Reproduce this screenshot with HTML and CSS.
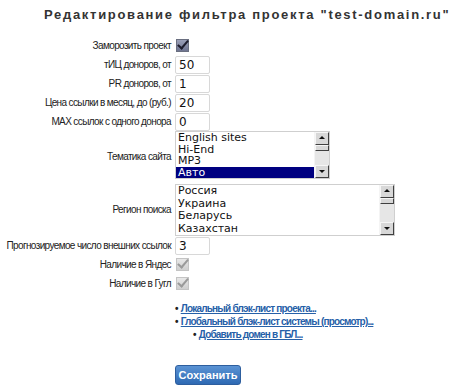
FILE: index.html
```html
<!DOCTYPE html>
<html lang="ru">
<head>
    <meta charset="UTF-8">
    <title>Редактирование фильтра проекта</title>
    <link rel="stylesheet" href="styles.css">
</head>
<body>

    <h1>Редактирование фильтра проекта "test-domain.ru"</h1>

    <!-- Filter form -->
    <table class="filter">
        <tr class="row-check">
            <td class="label">Заморозить проект</td>
            <td><span class="check"></span></td>
        </tr>
        <tr>
            <td class="label">тИЦ доноров, от</td>
            <td><span class="field">50</span></td>
        </tr>
        <tr>
            <td class="label">PR доноров, от</td>
            <td><span class="field">1</span></td>
        </tr>
        <tr>
            <td class="label">Цена ссылки в месяц, до (руб.)</td>
            <td><span class="field">20</span></td>
        </tr>
        <tr>
            <td class="label">MAX ссылок с одного донора</td>
            <td><span class="field">0</span></td>
        </tr>
        <tr>
            <td class="label">Тематика сайта</td>
            <td>
                <div class="listbox topics">
                    <div class="options">
                        <div>English sites</div>
                        <div>Hi-End</div>
                        <div>MP3</div>
                        <div class="selected">Авто</div>
                    </div>
                    <div class="scrollbar">
                        <span class="btn up"></span>
                        <span class="thumb"></span>
                        <span class="track"></span>
                        <span class="btn down"></span>
                    </div>
                </div>
            </td>
        </tr>
        <tr>
            <td class="label">Регион поиска</td>
            <td>
                <div class="listbox regions">
                    <div class="options">
                        <div>Россия</div>
                        <div>Украина</div>
                        <div>Беларусь</div>
                        <div>Казахстан</div>
                    </div>
                    <div class="scrollbar">
                        <span class="btn up"></span>
                        <span class="thumb"></span>
                        <span class="track"></span>
                        <span class="btn down"></span>
                    </div>
                </div>
            </td>
        </tr>
        <tr>
            <td class="label">Прогнозируемое число внешних ссылок</td>
            <td><span class="field">3</span></td>
        </tr>
        <tr class="row-check">
            <td class="label">Наличие в Яндес</td>
            <td><span class="check disabled"></span></td>
        </tr>
        <tr class="row-check">
            <td class="label">Наличие в Гугл</td>
            <td><span class="check disabled"></span></td>
        </tr>
    </table>

    <!-- Blacklist links -->
    <ul class="links">
        <li><a href="#">Локальный блэк-лист проекта...</a></li>
        <li><a href="#">Глобальный блэк-лист системы (просмотр)...</a>
            <ul>
                <li><a href="#">Добавить домен в ГБЛ...</a></li>
            </ul>
        </li>
    </ul>

    <button class="save">Сохранить</button>

</body>
</html>
```

FILE: styles.css
```css
body {
    margin: 0;
    padding: 0;
    background: white;
    color: #222;
    font-family: "Liberation Sans", Arial, sans-serif;
    font-size: 10px;
}

h1 {
    margin: 7px 0 0 44px;
    font-size: 13px;
    font-weight: bold;
    letter-spacing: 1.7px;
    color: #333;
    white-space: nowrap;
    height: 16px;
    line-height: 16px;
}

.filter {
    border-collapse: collapse;
    margin: 13px 0 0 5px;
}

.filter td {
    padding: 0;
    height: 19px;
    vertical-align: middle;
}

.filter td.label {
    width: 166px;
    padding-right: 4px;
    text-align: right;
    white-space: nowrap;
    letter-spacing: -0.62px;
}

.field {
    display: block;
    box-sizing: border-box;
    width: 35px;
    height: 18px;
    border: 1px solid #d8d8d8;
    border-radius: 2px;
    padding: 0 3px;
    font-family: "DejaVu Sans", Verdana, sans-serif;
    font-size: 12px;
    line-height: 16px;
    color: #111;
}

.check {
    display: block;
    width: 11px;
    height: 11px;
    margin-left: 1px;
    border: 1px solid #6a6f80;
    background: linear-gradient(#9aa0b8, #6e7490);
    position: relative;
}

.check::after {
    content: "";
    position: absolute;
    left: 3px;
    top: -2px;
    width: 4px;
    height: 9px;
    border: solid #1c1c2c;
    border-width: 0 2px 2px 0;
    transform: rotate(40deg);
}

.check.disabled {
    border-color: #c4c4c4;
    background: linear-gradient(#e8e8e8, #cfcfcf);
}

.check.disabled::after {
    border-color: #9a9a9a;
}

.listbox {
    display: flex;
    box-sizing: border-box;
    border: 1px solid #cfcfcf;
    background: white;
}

.listbox.topics {
    width: 155px;
    height: 48px;
    margin: 0 0 3px;
}

.listbox.regions {
    width: 220px;
    height: 52px;
    margin: 2px 0 0;
}

.options {
    flex: 1;
    font-family: "DejaVu Sans", Verdana, sans-serif;
    font-size: 11px;
    color: #111;
    overflow: hidden;
}

.options div {
    height: 11.5px;
    line-height: 11.5px;
    padding-left: 2px;
}

.regions .options div {
    height: 12.5px;
    line-height: 12.5px;
}

.options div.selected {
    background: #000080;
    color: white;
}

.scrollbar {
    width: 14px;
    display: flex;
    flex-direction: column;
    background: #e6e6e6;
    border-left: 1px solid #f4f4f4;
}

.scrollbar span {
    display: block;
}

.scrollbar .btn,
.scrollbar .thumb {
    box-sizing: border-box;
    background: #d8d8d8;
    border: 1px solid;
    border-color: #f6f6f6 #404040 #404040 #f6f6f6;
    position: relative;
}

.scrollbar .btn {
    height: 13px;
}

.scrollbar .thumb {
    height: 6px;
}

.scrollbar .track {
    flex: 1;
}

.scrollbar .btn::after {
    content: "";
    position: absolute;
    left: 3px;
    width: 0;
    height: 0;
    border-left: 3px solid transparent;
    border-right: 3px solid transparent;
}

.scrollbar .up::after {
    top: 3px;
    border-bottom: 3px solid #111;
}

.scrollbar .down::after {
    top: 4px;
    border-top: 3px solid #111;
}

.links {
    list-style: none;
    margin: 9px 0 0 175px;
    padding: 0;
    font-size: 10px;
    font-weight: bold;
    letter-spacing: -0.8px;
}

.links li {
    height: 13px;
    line-height: 13px;
    white-space: nowrap;
}

.links li::before {
    content: "•";
    color: #222;
    margin-right: 3px;
}

.links ul {
    list-style: none;
    margin: 0 0 0 18px;
    padding: 0;
}

.links a {
    color: #2660a8;
    text-decoration: underline;
}

.save {
    display: block;
    margin: 37px 0 0 175px;
    width: 66px;
    height: 20px;
    padding: 0;
    border: 1px solid #2d5e9e;
    border-radius: 3px;
    background: linear-gradient(#5b93d4, #2e69b3);
    color: white;
    font-family: "Liberation Sans", Arial, sans-serif;
    font-size: 11px;
    font-weight: bold;
}
```
